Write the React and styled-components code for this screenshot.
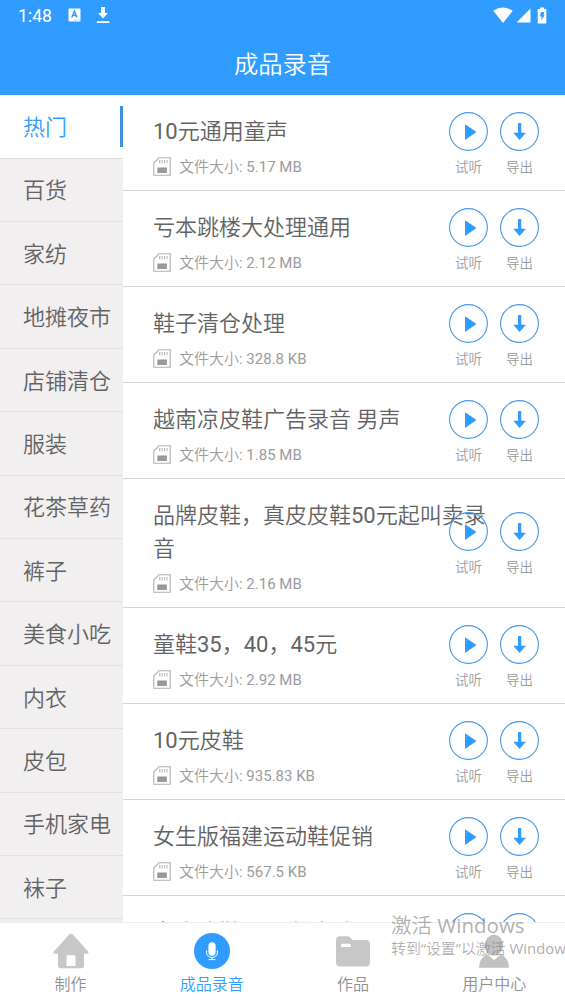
import React from "react";
import styled, { createGlobalStyle } from "styled-components";

const BLUE = "#319cff";

const GlobalStyle = createGlobalStyle`
  * { box-sizing: border-box; }
  body {
    margin: 0;
    overflow: hidden;
    background: #fff;
    font-family: Roboto, "Noto Sans CJK SC DemiLight", "Noto Sans CJK SC", sans-serif;
  }
  svg { display: block; }
`;

const Screen = styled.div`
  position: relative;
  display: flex;
  flex-direction: column;
  width: 565px;
  height: 1004px;
  overflow: hidden;
`;

const Header = styled.header`
  flex: none;
  height: 95.3px;
  background: ${BLUE};
  color: #fff;
`;

const StatusBar = styled.div`
  display: flex;
  align-items: center;
  height: 32px;
  padding: 0 18px;
`;

const Clock = styled.span`
  width: 50px;
  font-size: 17.6px;
  font-weight: 400;
  line-height: 32px;
`;

const StatusIcons = styled.div`
  display: flex;
  align-items: center;
  gap: ${(p) => p.$gap}px;
  margin-left: ${(p) => (p.$end ? "auto" : 0)};
  padding-bottom: 2px;
`;

const PageTitle = styled.h1`
  margin: 0;
  font-size: 24.3px;
  font-weight: 400;
  line-height: 65px;
  text-align: center;
`;

const Body = styled.div`
  flex: 1;
  display: flex;
  min-height: 0;
`;

const Sidebar = styled.aside`
  flex: none;
  width: 123px;
  background: #f1eff0;
  overflow: hidden;
`;

const Category = styled.div`
  display: flex;
  align-items: center;
  justify-content: space-between;
  height: 63.4px;
  padding-left: 23px;
  border-bottom: 1px solid ${(p) => (p.$active ? "#dcdcdc" : "#e2e1e2")};
  background: ${(p) => (p.$active ? "#fff" : "transparent")};
  color: ${(p) => (p.$active ? BLUE : "#636363")};
  font-size: 22px;
  white-space: nowrap;
`;

const CategoryName = styled.span`
  padding-bottom: 3px;
`;

const ActiveMark = styled.span`
  width: 3px;
  height: 41px;
  background: #3f8fe0;
`;

const List = styled.main`
  flex: 1;
  min-width: 0;
  overflow: hidden;
`;

const Row = styled.article`
  display: flex;
  align-items: center;
  height: ${(p) => (p.$tall ? 129 : 96)}px;
  padding: 0 25px 0 30px;
  border-bottom: 1.5px solid #d6d6d6;
`;

const Info = styled.div`
  flex: none;
  width: 335px;
  margin-right: -39px;
  padding-top: 6px;
`;

const Name = styled.h2`
  margin: 0;
  color: #636363;
  font-size: 22px;
  font-weight: 400;
  line-height: 33px;
`;

const Meta = styled.div`
  display: flex;
  align-items: center;
  gap: 8px;
  height: 20px;
  margin-top: 9px;
  color: #9c9c9c;
  font-size: 15px;
  line-height: 20px;
  white-space: nowrap;
`;

const Actions = styled.div`
  display: flex;
  gap: 12px;
  padding-top: 3px;
`;

const Action = styled.div`
  display: flex;
  flex-direction: column;
  align-items: center;
  gap: 6px;
  width: 39px;
  color: #9c9c9c;
  font-size: 13.5px;
  line-height: 20px;
`;

const TabBar = styled.nav`
  flex: none;
  display: flex;
  height: 82px;
  border-top: 1px solid #ededed;
  background: #fff;
`;

const Tab = styled.div`
  flex: 1;
  display: flex;
  flex-direction: column;
  align-items: center;
  padding-top: 10px;
  gap: 4px;
  color: ${(p) => (p.$active ? BLUE : "#909090")};
  font-size: 16px;
  line-height: 24px;
`;

const Watermark = styled.div`
  position: absolute;
  left: 391px;
  top: 911px;
  color: rgba(125, 125, 125, 0.62);
  font-family: "Open Sans", "Noto Sans CJK SC DemiLight", "Noto Sans CJK SC", sans-serif;
  white-space: nowrap;
`;

const WatermarkTitle = styled.div`
  font-size: 20.5px;
  line-height: 28px;
`;

const WatermarkText = styled.div`
  margin-top: -1px;
  font-size: 14.9px;
  line-height: 20px;
`;

const KeyboardIcon = () => (
  <svg width="13" height="14" viewBox="0 0 13 14">
    <rect x="0.5" y="0.5" width="12" height="13" rx="1" fill="#fff" />
    <path d="M3.8 9.5 6.4 3.3 9 9.5M4.7 7.6H8.1" fill="none" stroke={BLUE} strokeWidth="1.5" />
    <path d="M6.5 12h1M8.5 12h1M10.5 12h1" stroke={BLUE} strokeWidth="0.8" />
  </svg>
);

const SavedIcon = () => (
  <svg width="14" height="18" viewBox="0 0 14 18">
    <path d="M5 1h4v6h3l-5 5.5L2 7h3zM.8 15.3h12.6v1.7H.8z" fill="#fff" />
  </svg>
);

const WifiIcon = () => (
  <svg width="20" height="17" viewBox="0 0 20 17">
    <path d="M.3 3.8Q10-2.6 19.7 3.8L10 16z" fill="#fff" />
  </svg>
);

const SignalIcon = () => (
  <svg width="15" height="15" viewBox="0 0 15 15">
    <path d="M14.5.5v14H.5z" fill="#fff" />
  </svg>
);

const BatteryIcon = () => (
  <svg width="10" height="17" viewBox="0 0 10 17">
    <path d="M3 .4h4v1.7h2.3v14.4H.7V2.1H3z" fill="#fff" />
    <path d="M4 5h3.5L6.4 8h1.4L4.2 13.2l.5-3.7H3z" fill={BLUE} />
  </svg>
);

const CardIcon = () => (
  <svg width="18" height="19" viewBox="0 0 18 19">
    <path d="M6 .8h11.2v17.4H.8V6z" fill="none" stroke="#b0b0b0" strokeWidth="1.1" />
    <path d="M6.8 3v3.4M9.2 3v3.4M11.6 3v3.4M14 3v3.4" stroke="#b0b0b0" />
    <rect x="4.3" y="10.5" width="9.6" height="5.5" fill="#999" />
  </svg>
);

const PlayIcon = () => (
  <svg width="39" height="39" viewBox="0 0 39 39">
    <circle cx="19.5" cy="19.5" r="18.9" fill="none" stroke="#4499e8" strokeWidth="1.1" />
    <path d="M16 12.2 27.6 20 16 28z" fill={BLUE} />
  </svg>
);

const ExportIcon = () => (
  <svg width="39" height="39" viewBox="0 0 39 39">
    <circle cx="19.5" cy="19.5" r="18.9" fill="none" stroke="#4499e8" strokeWidth="1.1" />
    <path d="M18 11h3.2v9.8h4.8L19.6 28l-6.400-7.200H18z" fill={BLUE} />
  </svg>
);

const HomeIcon = () => (
  <svg width="36" height="36" viewBox="0 0 36 36">
    <path
      fillRule="evenodd"
      d="M16.4 1.2Q18 .1 19.6 1.2L35.2 18.4Q36.3 20.6 34 20.7H31V32.5Q31 35.2 28.3 35.2H7.7Q5 35.2 5 32.5V20.7H2Q-.3 20.6.8 18.4zM14.8 22.2Q13.5 22.2 13.5 23.5V33h9v-9.5q0-1.3-1.3-1.3z"
      fill="#c7c7c7"
    />
  </svg>
);

const MicIcon = () => (
  <svg width="36" height="36" viewBox="0 0 36 36">
    <circle cx="18" cy="18" r="18" fill={BLUE} />
    <rect x="14.4" y="9.3" width="7.2" height="13.4" rx="3.6" fill="#fff" />
    <path d="M12.6 17.5v2.2a5.4 4.8 0 0 0 10.8 0v-2.2M18 24.5v2M14.5 26.6h7" fill="none" stroke="#fff" strokeWidth="1" />
  </svg>
);

const FolderIcon = () => (
  <svg width="36" height="36" viewBox="0 0 36 36">
    <path d="M5 3.2h7.8q1.5 0 2.8 1.7l2 2.2H31q4 0 4 4V29.500q0 4-4 4H5q-4 0-4-4V7.2q0-4 4-4z" fill="#c7c7c7" />
    <rect x="6" y="10.7" width="10" height="3.2" rx="1" fill="#fff" />
  </svg>
);

const UserIcon = () => (
  <svg width="36" height="36" viewBox="0 0 36 36">
    <ellipse cx="18" cy="12.2" rx="9.2" ry="10.5" fill="#c1c1c1" />
    <path d="M11 21.500 18 27l7-5.500q8 4 8 13.200H3q0-9.200 8-13.200z" fill="#c1c1c1" />
  </svg>
);

const categories = [
  "热门", "百货", "家纺", "地摊夜市", "店铺清仓", "服装", "花茶草药",
  "裤子", "美食小吃", "内衣", "皮包", "手机家电", "袜子",
];

const recordings = [
  { name: "10元通用童声", size: "5.17 MB" },
  { name: "亏本跳楼大处理通用", size: "2.12 MB" },
  { name: "鞋子清仓处理", size: "328.8 KB" },
  { name: "越南凉皮鞋广告录音 男声", size: "1.85 MB" },
  { name: "品牌皮鞋，真皮皮鞋50元起叫卖录音", size: "2.16 MB", tall: true },
  { name: "童鞋35，40，45元", size: "2.92 MB" },
  { name: "10元皮鞋", size: "935.83 KB" },
  { name: "女生版福建运动鞋促销", size: "567.5 KB" },
  { name: "女皮凉鞋工厂直销活动", size: "1.26 MB" },
];

const tabs = [
  { label: "制作", Icon: HomeIcon },
  { label: "成品录音", Icon: MicIcon, active: true },
  { label: "作品", Icon: FolderIcon },
  { label: "用户中心", Icon: UserIcon },
];

export default function App() {
  return (
    <Screen>
      <GlobalStyle />
      <Header>
        <StatusBar>
          <Clock>1:48</Clock>
          <StatusIcons $gap={15}>
            <KeyboardIcon />
            <SavedIcon />
          </StatusIcons>
          <StatusIcons $gap={3} $end>
            <WifiIcon />
            <SignalIcon />
            <span />
            <BatteryIcon />
          </StatusIcons>
        </StatusBar>
        <PageTitle>成品录音</PageTitle>
      </Header>
      <Body>
        <Sidebar>
          {categories.map((name, i) => (
            <Category key={name} $active={i === 0}>
              <CategoryName>{name}</CategoryName>
              {i === 0 && <ActiveMark />}
            </Category>
          ))}
        </Sidebar>
        <List>
          {recordings.map((item) => (
            <Row key={item.name} $tall={item.tall}>
              <Info>
                <Name>{item.name}</Name>
                <Meta>
                  <CardIcon />
                  <span>文件大小: {item.size}</span>
                </Meta>
              </Info>
              <Actions>
                <Action>
                  <PlayIcon />
                  试听
                </Action>
                <Action>
                  <ExportIcon />
                  导出
                </Action>
              </Actions>
            </Row>
          ))}
        </List>
      </Body>
      <TabBar>
        {tabs.map(({ label, Icon, active }) => (
          <Tab key={label} $active={active}>
            <Icon />
            {label}
          </Tab>
        ))}
      </TabBar>
      <Watermark>
        <WatermarkTitle>激活 Windows</WatermarkTitle>
        <WatermarkText>转到“设置”以激活 Windows。</WatermarkText>
      </Watermark>
    </Screen>
  );
}
